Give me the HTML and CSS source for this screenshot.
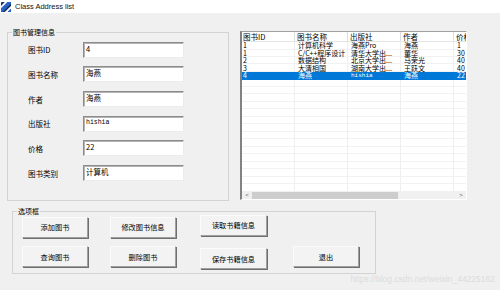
FILE: index.html
```html
<!DOCTYPE html>
<html lang="zh">
<head>
  <meta charset="UTF-8">
  <title>Class Address list</title>
  <link rel="stylesheet" href="styles.css">
</head>
<body>
  <!-- Title bar -->
  <div class="titlebar">
    <svg class="app-icon" viewBox="0 0 11 11">
      <rect width="11" height="11" fill="#2a62c4"/>
      <path d="M0 4L4 0H7L0 7Z" fill="#fff"/>
      <path d="M4 11L11 4V7L7 11Z" fill="#fff"/>
      <path d="M2 11L11 2V4L4 11Z" fill="#13294f"/>
      <path d="M0 2L2 0H4L0 4Z" fill="#13294f"/>
    </svg>
    <span>Class Address list</span>
  </div>

  <div class="client">
    <div class="top">
      <!-- Book info group -->
      <div class="group info">
        <span class="group-title">图书管理信息</span>
        <div class="form">
          <label>图书ID</label><div class="textbox">4</div>
          <label>图书名称</label><div class="textbox">海燕</div>
          <label>作者</label><div class="textbox">海燕</div>
          <label>出版社</label><div class="textbox latin">hishia</div>
          <label>价格</label><div class="textbox">22</div>
          <label>图书类别</label><div class="textbox">计算机</div>
        </div>
      </div>

      <!-- Book list -->
      <div class="listview">
        <div class="lv-head">
          <span>图书ID</span><span>图书名称</span><span>出版社</span><span>作者</span><span>价格</span>
        </div>
        <div class="lv-body">
          <div class="lv-row"><span>1</span><span>计算机科学</span><span>海燕Pro</span><span>海燕</span><span>1</span></div>
          <div class="lv-row"><span>1</span><span>C/C++程序设计</span><span>清华大学出...</span><span>董华</span><span>30</span></div>
          <div class="lv-row"><span>2</span><span>数据结构</span><span>北京大学出...</span><span>马荣光</span><span>40</span></div>
          <div class="lv-row"><span>3</span><span>大清相国</span><span>湖南大学出...</span><span>王跃文</span><span>40</span></div>
          <div class="lv-row selected"><span>4</span><span>海燕</span><span class="latin">hishia</span><span>海燕</span><span>22</span></div>
        </div>
        <div class="lv-scroll">
          <span class="arrow">&lt;</span>
          <span class="thumb"></span>
          <span class="arrow right">&gt;</span>
        </div>
      </div>
    </div>

    <!-- Options group -->
    <div class="group options">
      <span class="group-title">选项框</span>
      <div class="buttons">
        <button>添加图书</button>
        <button>修改图书信息</button>
        <button class="up">读取书籍信息</button>
        <span></span>
        <button>查询图书</button>
        <button>删除图书</button>
        <button class="down">保存书籍信息</button>
        <button>退出</button>
      </div>
    </div>
  </div>

  <div class="watermark">https://blog.csdn.net/weixin_44225162</div>
</body>
</html>
```

FILE: styles.css
```css
* {
  margin: 0;
  padding: 0;
  box-sizing: border-box;
}
html, body {
  width: 500px;
  height: 290px;
  overflow: hidden;
}
body {
  position: relative;
  background: #f0f0f0;
  color: #000;
  font-family: "Noto Sans CJK SC", "Liberation Sans", sans-serif;
}

/* Title bar */
.titlebar {
  height: 13px;
  background: #fff;
  display: flex;
  align-items: center;
  gap: 4px;
  padding-left: 1px;
  font-family: "Liberation Sans", sans-serif;
  font-size: 7.5px;
  color: #111;
}
.app-icon {
  width: 10px;
  height: 10px;
}

.client {
  padding: 19px 0 0 7px;
}
.top {
  display: flex;
  align-items: flex-start;
  gap: 11px;
}

/* Group boxes */
.group {
  position: relative;
  border: 1px solid #d3d3d3;
}
.group-title {
  position: absolute;
  top: -6px;
  left: 4px;
  padding: 0 1px;
  background: #f0f0f0;
  font-size: 7px;
  line-height: 10px;
}

.info {
  width: 222px;
  height: 169px;
  padding: 8.7px 0 0 20px;
}
.form {
  display: grid;
  grid-template-columns: 55px 101px;
  grid-auto-rows: 16px;
  row-gap: 8.7px;
  align-items: center;
}
.form label {
  font-size: 7.5px;
  line-height: 10px;
  padding-top: 1px;
}
.textbox {
  height: 16px;
  background: #fff;
  border: 1px solid;
  border-color: #8c8c8c #ececec #ececec #8c8c8c;
  box-shadow: inset 1px 1px 0 #b4b4b4;
  font-size: 7.5px;
  line-height: 10px;
  padding: 1px 0 0 2px;
}
.latin {
  font-family: "Liberation Mono", monospace;
  font-size: 6.5px;
}

/* List view */
.listview {
  width: 227px;
  height: 169px;
  margin-top: -1px;
  background: #fff;
  border: 1px solid #fff;
  border-top-color: #a0a0a0;
  border-left: 2px solid #828282;
  display: flex;
  flex-direction: column;
  overflow: hidden;
}
.lv-head {
  flex: none;
  height: 10px;
  display: flex;
  border-bottom: 1px solid #e5e5e5;
}
.lv-head span {
  flex: none;
  width: 53px;
  border-right: 1px solid #dcdcdc;
  padding-left: 2px;
  font-size: 7.5px;
  line-height: 9px;
  white-space: nowrap;
}
.lv-body {
  flex: 1;
  background:
    repeating-linear-gradient(to right, transparent 0 52px, #efefef 52px 53px),
    repeating-linear-gradient(to bottom, transparent 0 6.5px, #f2f2f2 6.5px 7.5px);
}
.lv-row {
  display: flex;
  height: 7.5px;
  font-size: 7px;
  line-height: 7.5px;
}
.lv-row span {
  flex: none;
  width: 53px;
  padding-left: 3px;
  white-space: nowrap;
}
.lv-row span:first-child,
.lv-head span:first-child {
  padding-left: 1px;
}
.lv-row .latin {
  font-size: 6px;
}
.lv-row.selected {
  background: #0078d7;
  color: #fff;
}
.lv-scroll {
  flex: none;
  height: 8px;
  background: #f0f0f0;
  display: flex;
  align-items: center;
  font-family: "Liberation Sans", sans-serif;
  font-size: 6px;
  color: #606060;
}
.arrow {
  width: 10px;
  text-align: center;
}
.arrow.right {
  margin-left: auto;
}
.thumb {
  width: 146px;
  height: 7px;
  background: #cdcdcd;
}

/* Option buttons */
.options {
  width: 364px;
  height: 63px;
  margin: 10px 0 0 5px;
  padding: 4.5px 0 0 9px;
}
.buttons {
  display: grid;
  grid-template-columns: 88px 90px 93px 67px;
  grid-auto-rows: 21px;
  row-gap: 8.5px;
}
.buttons button {
  width: 66px;
  height: 21px;
  background: #f3f3f3;
  border: 1px solid;
  border-color: #fbfbfb #a0a0a0 #a0a0a0 #fbfbfb;
  box-shadow: 1px 1px 0 #6e6e6e;
  font-family: "Noto Sans CJK SC", sans-serif;
  font-size: 7.2px;
  color: #000;
}
.buttons .up {
  width: 67px;
  margin-top: -2px;
}
.buttons .down {
  width: 67px;
  margin-top: 2px;
}

.watermark {
  position: absolute;
  right: 5px;
  top: 274px;
  font-family: "Liberation Sans", sans-serif;
  font-size: 8.5px;
  color: #dcdcdc;
}
```
